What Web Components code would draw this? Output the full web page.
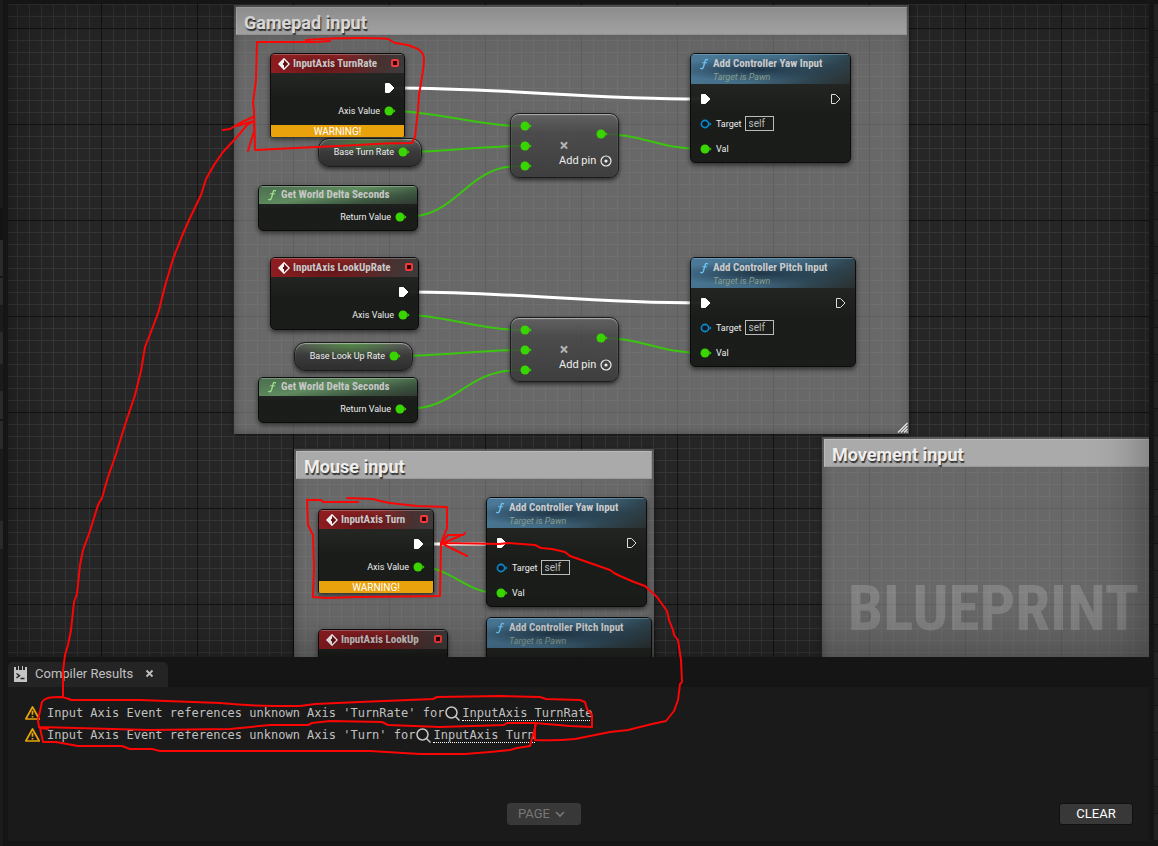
<!DOCTYPE html>
<html lang="en">
<head>
<meta charset="utf-8">
<title>Blueprint Editor</title>
<style>
html, body { margin: 0; height: 100%; background: #151515; }
body { font-family: Roboto, "Liberation Sans", sans-serif; color: #c0c0c0; overflow: hidden; }
</style>
</head>
<body>
<bp-editor>
  <bp-graph slot="graph">
    <bp-comment style="--x:226;--y:1;--w:675;--h:429" resizable>Gamepad input</bp-comment>
    <bp-comment style="--x:286;--y:445;--w:360;--h:420">Mouse input</bp-comment>
    <bp-comment style="--x:814;--y:433;--w:400;--h:420">Movement input</bp-comment>
    <bp-wires></bp-wires>

    <bp-variable style="--x:310;--y:134;--w:104;--p:14">Base Turn Rate</bp-variable>
    <bp-node kind="event" warning style="--x:262;--y:49;--w:135">
      <span slot="title">InputAxis TurnRate</span>
      <bp-pin kind="exec" side="out" on></bp-pin>
      <bp-pin side="out" on>Axis Value</bp-pin>
    </bp-node>
    <bp-node kind="pure" style="--x:250;--y:181;--w:160">
      <span slot="title">Get World Delta Seconds</span>
      <bp-pin side="out" on>Return Value</bp-pin>
    </bp-node>
    <bp-multiply style="--x:502;--y:109"></bp-multiply>
    <bp-call style="--x:682;--y:49;--w:161">Add Controller Yaw Input</bp-call>

    <bp-node kind="event" style="--x:262;--y:253;--w:149">
      <span slot="title">InputAxis LookUpRate</span>
      <bp-pin kind="exec" side="out" on></bp-pin>
      <bp-pin side="out" on>Axis Value</bp-pin>
    </bp-node>
    <bp-variable style="--x:286;--y:338;--w:119;--p:14">Base Look Up Rate</bp-variable>
    <bp-node kind="pure" style="--x:250;--y:373;--w:160">
      <span slot="title">Get World Delta Seconds</span>
      <bp-pin side="out" on>Return Value</bp-pin>
    </bp-node>
    <bp-multiply style="--x:502;--y:313"></bp-multiply>
    <bp-call style="--x:682;--y:253;--w:166">Add Controller Pitch Input</bp-call>

    <bp-node kind="event" warning style="--x:310;--y:505;--w:116">
      <span slot="title">InputAxis Turn</span>
      <bp-pin kind="exec" side="out" on></bp-pin>
      <bp-pin side="out" on>Axis Value</bp-pin>
    </bp-node>
    <bp-call style="--x:478;--y:493;--w:161">Add Controller Yaw Input</bp-call>
    <bp-node kind="event" style="--x:310;--y:625;--w:130">
      <span slot="title">InputAxis LookUp</span>
      <bp-pin kind="exec" side="out"></bp-pin>
    </bp-node>
    <bp-call folded style="--x:478;--y:613;--w:166">Add Controller Pitch Input</bp-call>
  </bp-graph>
  <bp-results slot="results">
    <bp-message target="InputAxis TurnRate">Input Axis Event references unknown Axis 'TurnRate' for</bp-message>
    <bp-message target="InputAxis Turn">Input Axis Event references unknown Axis 'Turn' for</bp-message>
  </bp-results>
</bp-editor>
<pen-markup></pen-markup>

<script>
function define(name, html, setup) {
  const template = document.createElement('template');
  template.innerHTML = html;
  customElements.define(name, class extends HTMLElement {
    constructor() {
      super();
      this.attachShadow({ mode: 'open' }).append(template.content.cloneNode(true));
    }
    connectedCallback() { if (setup) setup(this, this.shadowRoot); }
  });
}

const place = 'position:absolute; left:calc(var(--x)*1px); top:calc(var(--y)*1px); width:calc(var(--w)*1px); box-sizing:border-box;';
const titleFont = '"Roboto Condensed",Roboto,sans-serif';
const fIcon = '<svg class="f" width="10" height="12" viewBox="0 0 10 12" fill="none" stroke="currentColor" stroke-linecap="round"><path stroke-width="1.4" d="M8.500 1.800C7.400.9 6.400 1.600 6 3.400L4.600 8.600C4.100 10.400 3 11.200 1.800 10.400"/><path stroke-width="1.1" d="M3.6 4.8h4"/></svg>';

define('bp-editor', `
<style>
:host { display:grid; grid-template-columns:3px 1fr 4px; column-gap:5px; height:100%; }
.rail { background:linear-gradient(#1b1b1b 208px,#131313 208px 240px,#2a2a2a 240px 276px,#161616 276px 278px,#2a2a2a 278px 305px,#1b1b1b 305px 332px,#2a2a2a 332px 364px,#1b1b1b 364px 391px,#2a2a2a 391px 419px,#161616 419px 421px,#2a2a2a 421px 449px,#1b1b1b 449px 521px,#2a2a2a 521px 549px,#1b1b1b 549px); }
.right { background:repeating-linear-gradient(#222 0 26px,#151515 26px 27px,#1f1f1f 27px 53px,#151515 53px 54px); margin:4px 0 5px; }
main { display:flex; flex-direction:column; min-width:0; height:100%; box-sizing:border-box; padding:4px 0 5px; }
</style>
<div class="rail"></div>
<main><slot name="graph"></slot><slot name="results"></slot></main>
<div class="rail right"></div>`);

define('bp-graph', `
<style>
:host { display:block; flex:1; min-height:0; position:relative; overflow:hidden; background-color:#262626;
  background-image:
    linear-gradient(90deg,#131313 1px,transparent 1px), linear-gradient(#131313 1px,transparent 1px),
    linear-gradient(90deg,#363636 1px,transparent 1px), linear-gradient(#363636 1px,transparent 1px);
  background-size:96px 96px,96px 96px,12px 12px,12px 12px;
  background-position:93px 0,0 24px,9px 0,0 0; }
.mark { position:absolute; right:10px; bottom:12px; font:bold 63px/72px "Liberation Sans Narrow","Roboto Condensed",Roboto,sans-serif; color:rgba(255,255,255,.17); }
.shade { position:absolute; inset:0; pointer-events:none; box-shadow:inset 0 0 56px rgba(0,0,0,.4); }
</style>
<slot></slot><div class="mark">BLUEPRINT</div><div class="shade"></div>`);

define('bp-comment', `
<style>
:host { display:block; ${place} height:calc(var(--h)*1px); padding:2px; background:rgba(165,165,165,.52); box-shadow:inset 0 0 8px rgba(0,0,0,.3),0 1px 4px rgba(0,0,0,.6); }
h2 { margin:0; height:28px; box-sizing:border-box; padding:0 7px; background:#aaa; border:1px solid #b9b9b9; border-bottom-color:#999; border-right-color:#999;
  font:bold 18px/29px Roboto,sans-serif; color:#eee; text-shadow:1px 2px 1px #333; white-space:nowrap; }
svg { display:none; position:absolute; right:1px; bottom:1px; }
:host([resizable]) svg { display:block; }
</style>
<h2><slot></slot></h2>
<svg width="11" height="11" viewBox="0 0 11 11" stroke="#e8e8e8" stroke-width="1.2"><path d="M1 10.500l9.500-9.500M4 10.500l6.500-6.500M7 10.500l3.500-3.500M9.500 10.500l1-1"/></svg>`);

define('bp-wires', `
<style>
:host { display:block; position:absolute; inset:0; }
svg { display:block; width:100%; height:100%; overflow:visible; fill:none; }
.exec { stroke:#fff; stroke-width:3; } .num { stroke:#3bc50f; stroke-width:2; }
</style>
<svg><g transform="translate(-8 -4)">
<g class="exec"><path d="M395 88C500 88 590 99 700 99"/><path d="M409 292C510 292 590 303 700 303"/><path d="M424 544H496"/></g>
<g class="num">
<path d="M392 111C435 111 478 126 520 126"/><path d="M408 152C445 152 480 146 520 146"/><path d="M405 217C460 217 464 166 520 166"/>
<path d="M606 134C640 134 662 149 700 149"/>
<path d="M406 315C445 315 480 330 520 330"/><path d="M399 356C440 356 480 350 520 350"/><path d="M405 409C460 409 464 370 520 370"/>
<path d="M606 338C640 338 662 353 700 353"/><path d="M421 567C450 567 466 593 497 593"/>
</g></g></svg>`);

define('bp-pin', `
<style>
:host { display:flex; align-items:center; height:var(--pin-row,25px); gap:4px; font:9px/12px Roboto,sans-serif; color:#eee; white-space:nowrap; }
:host([side=out]) { flex-direction:row-reverse; }
svg { flex:none; display:none; }
:host(:not([kind])) .num, :host([kind=exec]) .exec, :host([kind=object]) .obj { display:block; }
.exec { fill:none; stroke:#ddd; } :host([on]) .exec { fill:#fff; stroke:#fff; }
</style>
<svg class="num" width="12" height="10" viewBox="0 0 12 10" fill="#38d500"><circle cx="5" cy="5" r="4.500"/><path d="M9.500 3l2 2-2 2z"/></svg>
<svg class="obj" width="12" height="10" viewBox="0 0 12 10"><circle cx="5" cy="5" r="3.600" fill="#0c1a22" stroke="#0a8bd0" stroke-width="1.600"/><path d="M9.500 3l2 2-2 2z" fill="#0a8bd0"/></svg>
<svg class="exec" width="12" height="12" viewBox="0 0 12 12"><path stroke-linejoin="round" d="M1.500 1.500h4l4.500 4.500-4.500 4.500h-4z"/></svg>
<slot></slot>`);

define('bp-node', `
<style>
:host { display:block; ${place} border-radius:5px; background:linear-gradient(rgba(38,42,38,.95),rgba(24,26,23,.97) 55%); border:1px solid #0c0c0c; box-shadow:0 2px 5px rgba(0,0,0,.6); overflow:hidden; --pin-row:23px; }
header { display:flex; align-items:center; height:19px; box-sizing:border-box; padding:1px 5px 0 7px; gap:3px; font:bold 11px/14px ${titleFont}; color:#c8c8c8; white-space:nowrap;
  background:radial-gradient(ellipse 40% 70% at 40% 70%,rgba(60,10,12,.55),transparent),linear-gradient(100deg,#8e1c20,#8a2426 50%,#4a3030 80%,#3c3c3c); box-shadow:inset 0 1px rgba(255,255,255,.25); }
svg { flex:none; display:none; } .f { color:#9fe08f; }
:host([kind=event]) .ev, :host([kind=pure]) .f { display:block; }
:host([kind=event]) .sq { display:block; margin-left:auto; width:4px; height:4px; border:2px solid #f03a3a; border-radius:2px; background:#300; }
.sq { display:none; margin-bottom:2px; }
.body { padding:3px 8px; }
:host([kind=pure]) header { height:18px; padding:0 8px; gap:4px; background:linear-gradient(170deg,#4f7350 10%,#5f8a5f 45%,#3c5540 75%,#303832); }
:host([kind=pure]) .body { padding:1px 10px 2px 8px; }
.warn { display:none; height:12px; background:#eaa20c; color:#fff; font:10px/13px Roboto,sans-serif; text-align:center; }
:host([warning]) { border-bottom:0; border-radius:5px 5px 2px 2px; }
:host([warning]) .warn { display:block; }
</style>
<header>
<svg class="ev" width="12" height="12" viewBox="0 0 12 12"><path d="M6 .8L11.200 6 6 11.200.8 6z" fill="#611" stroke="#fff" stroke-width="1.300"/><path d="M6 1.500v3L4.500 6 6 7.500v3L1.500 6z" fill="#fff"/><path d="M5 6h4" stroke="#611" stroke-width="1.500"/></svg>${fIcon}
<slot name="title"></slot><i class="sq"></i></header>
<div class="body"><slot></slot></div><div class="warn">WARNING!</div>`);

define('bp-call', `
<style>
:host { display:block; ${place} border-radius:5px; background:linear-gradient(rgba(38,42,38,.95),rgba(24,26,23,.97) 55%); border:1px solid #0c0c0c; box-shadow:0 2px 5px rgba(0,0,0,.6); overflow:hidden; }
header { display:grid; grid-template-columns:10px 1fr; column-gap:4px; align-content:start; height:30px; padding:3px 0 0 8px; box-sizing:border-box;
  background:radial-gradient(ellipse 55% 40% at 42% 52%,rgba(28,48,64,.9),transparent),linear-gradient(150deg,#4a7896 10%,#436c86 50%,#2e444f 78%,#2a2f30); box-shadow:inset 0 1px rgba(150,200,230,.4); }
h3 { margin:0; font:bold 11px/14px ${titleFont}; color:#ccc; white-space:nowrap; }
p { margin:0; grid-column:2; font:italic 9px/13px Roboto,sans-serif; color:#8a9e8c; }
.f { color:#6cc4f5; align-self:center; }
.body { padding:2px 8px 1px 9px; } .row { display:flex; justify-content:space-between; }
:host([folded]) .body > * { display:none; }
:host([folded]) .body { height:75px; }
.row.t { justify-content:flex-start; gap:3px; align-items:center; }
input { width:29px; height:15px; box-sizing:border-box; margin:0; padding:0 3px; border:1px solid #bbb; background:transparent; color:#bbb; font:10px/12px Roboto,sans-serif; }
</style>
<header>${fIcon}<h3><slot></slot></h3><p>Target is Pawn</p></header>
<div class="body">
<div class="row"><bp-pin kind="exec" on></bp-pin><bp-pin kind="exec"></bp-pin></div>
<div class="row t"><bp-pin kind="object"><label for="target">Target</label></bp-pin><input id="target" value="self" readonly></div>
<bp-pin on>Val</bp-pin></div>`);

define('bp-variable', `
<style>
:host { display:block; ${place} border-radius:11px; border:1px solid #1d1d1d; padding:0 calc(var(--p)*1px - 1px) 2px; background:radial-gradient(ellipse 50% 60% at 48% 0,rgba(80,170,60,.6),transparent),linear-gradient(#5c5c5c,#3b3b3b 45%,#2e2e2e); box-shadow:inset 0 1px 1px rgba(255,255,255,.45),0 2px 4px rgba(0,0,0,.6); --pin-row:25px; }
bp-pin { margin-right:-2px; }
</style>
<bp-pin side="out" on><slot></slot></bp-pin>`);

define('bp-multiply', `
<style>
:host { display:grid; grid-template-columns:32px 1fr; ${place} --w:109; height:65px; border-radius:9px; border:1px solid #1d1d1d; background:linear-gradient(rgba(95,95,95,.8),rgba(68,68,68,.8) 30%,rgba(55,55,55,.85)); box-shadow:inset 0 1px 1px rgba(255,255,255,.5),0 2px 4px rgba(0,0,0,.6); --pin-row:20px; }
.in { padding:2px 0 0 9px; }
.out { padding-top:14px; --pin-row:12px; }
.out bp-pin { margin-right:10px; }
.op { font:bold 16px/12px Roboto,sans-serif; color:#b4b4b4; width:42px; text-align:center; }
button { display:flex; align-items:center; gap:4px; border:0; background:none; padding:0; margin:2px 0 0 16px; height:14px; color:#eee; font:11px/12px Roboto,sans-serif; white-space:nowrap; }
svg { flex:none; }
</style>
<div class="in"><bp-pin on></bp-pin><bp-pin on></bp-pin><bp-pin on></bp-pin></div>
<div class="out"><bp-pin side="out" on></bp-pin><div class="op">×</div>
<button type="button">Add pin<svg width="12" height="12" viewBox="0 0 12 12"><circle cx="6" cy="6" r="5" fill="none" stroke="#eee" stroke-width="1.200"/><circle cx="6" cy="6" r="1.600" fill="#eee"/></svg></button></div>`);

define('bp-results', `
<style>
:host { display:block; flex:none; font-family:Roboto,sans-serif; }
.tabs { padding-top:5px; display:flex; }
.tab { display:flex; align-items:center; height:25px; width:160px; box-sizing:border-box; padding:0 14px 2px 6px; gap:8px; background:#242424; border-radius:5px 5px 0 0; font-size:13px; line-height:18px; color:#c0c0c0; white-space:nowrap; }
.tab button { margin-left:auto; border:0; background:none; padding:0; width:9px; height:9px; display:flex; color:#c0c0c0; }
.panel { min-height:154px; background:#1a1a1a; box-sizing:border-box; display:flex; flex-direction:column; padding:15px 16px 16px 17px; }
footer { display:flex; align-items:center; margin-top:auto; padding-left:3px; }
footer button { width:74px; height:22px; box-sizing:border-box; border:1px solid #101010; border-radius:3px; background:#383838; color:#fff; font:13px/18px Roboto,sans-serif; padding:0; }
footer .page { display:flex; align-items:center; justify-content:center; gap:5px; margin:0 auto; padding-right:4px; border-color:#383838; color:#777; }
</style>
<div class="tabs"><div class="tab">
<svg width="13" height="16" viewBox="0 0 13 16"><path fill="#c4c4c4" d="M0 1h2v3h2V0h1v4h3V0h1v4h2V1h2v15H0z"/><path d="M2.500 7.500l3 2.200-3 2.200M6.500 12.500h4" fill="none" stroke="#222" stroke-width="1.400"/></svg>
<span>Compiler Results</span>
<button type="button" aria-label="Close tab"><svg width="9" height="9" viewBox="0 0 9 9" stroke="currentColor" stroke-width="1.800"><path d="M1.500 1.500l6 6M7.500 1.500l-6 6"/></svg></button></div></div>
<div class="panel"><slot></slot><footer>
<button class="page" type="button" disabled>PAGE<svg width="10" height="7" viewBox="0 0 10 7" fill="none" stroke="currentColor" stroke-width="1.600"><path d="M1 1l4 4 4-4"/></svg></button>
<button type="button">CLEAR</button></footer></div>`);

define('bp-message', `
<style>
:host { display:flex; align-items:center; height:22px; font:12px/16px "DejaVu Sans Mono","Liberation Mono",monospace; color:#c0c0c0; white-space:nowrap; }
.w { margin-right:7px; } .m { margin:0 2px 0 1px; } svg { flex:none; }
a { color:inherit; text-decoration:none; border-bottom:1px dotted #fff; line-height:14px; margin-top:1px; }
</style>
<svg class="w" width="15" height="14" viewBox="0 0 15 14" fill="none" stroke="#e5a50a" stroke-width="1.700"><path stroke-linejoin="round" d="M7.500 1L14.200 13H.8z"/><path d="M7.500 4.800v4M7.500 10v1.600"/></svg>
<span><slot></slot></span>
<svg class="m" width="15" height="15" viewBox="0 0 15 15" fill="none" stroke="#c8c8c8" stroke-width="1.500"><circle cx="6.500" cy="6.500" r="5.500"/><path d="M10.500 10.500l4 4"/></svg>
<a href="#"></a>`, (el, root) => { root.querySelector('a').textContent = el.getAttribute('target'); });

define('pen-markup', `
<style>
:host { position:absolute; inset:0; pointer-events:none; overflow:hidden; }
svg { display:block; width:100%; height:100%; fill:none; stroke:#fb0505; stroke-width:2; stroke-linejoin:round; stroke-linecap:round; }
</style>
<svg>
<path d="M306 40Q330 38 358 38T388 39L395 43 408 45 418 49Q424 53 424 59T422 77L419 95 418 110 415 137 412 143Q385 143 358 145L255 150 254 110 253 103 256 80 257 42 315 42 330 41"/>
<path d="M63 697V671L65 655 68 645 71 630 74 602 77 594 80 565 83 550 90 531 98 505 102 498 108 477 116 454 124 428 132 404 135 395 141 371 145 347 149 337 157 316 159 310 165 286 173 259 182 236 190 218 201 195 206 179 214 165 223 152 237 137 247 125 254 121M223 130L230 129 240 123 253 117M237 126L254 121M254 118V132L251 141 248 151"/>
<path d="M347 498L373 499 380 501 390 503 417 506 447 507V528L441 543 440 596 357 597 327 598 313 597 314 567 313 535 308 525 307 500 321 500 323 502H358"/>
<path d="M465 533L463 535 448 535 441 543 467 556M460 536L443 543M441 543L500 544 507 543 535 545 541 548 552 549 565 552 570 556 590 563 610 570 614 573 620 576 634 582 645 586 657 597 667 611 669 620 673 630 674 635 678 640 681 660 682 682 680 684 678 700 674 711 666 721 652 724 628 730 610 732 595 735 575 739Q555 741 535 740V725"/>
<path d="M39 727L38 720 42 702Q44 699 48 698T62 697L69 699 71 700H140L220 703Q250 706 275 706H300L315 704 360 702 433 699 437 697 500 696 540 697 546 699 580 700 585 702 587 709 592 715V727L570 726 535 723H507L504 725 440 727 388 725 382 722 330 721 312 723 308 725 270 725 230 729 150 730 39 727"/>
<path d="M48 729L40 728 43 742H56L78 746H122L130 749H152L160 751H370L420 754H465L490 752 510 750 517 748 530 746 533 735 536 724"/>
</svg>`);
</script>
</body>
</html>
